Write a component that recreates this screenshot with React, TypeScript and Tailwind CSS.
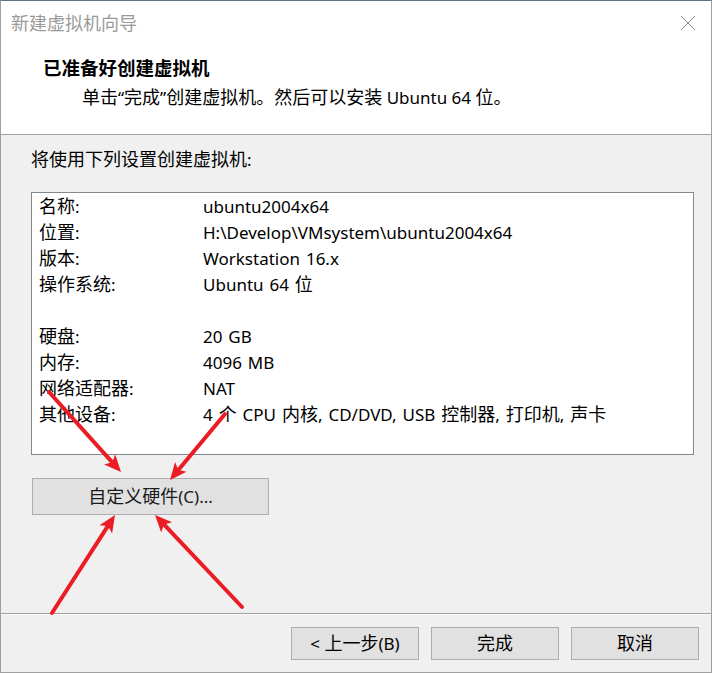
import React from "react";

type Pt = [number, number];

function arrowHead(t: Pt, p: Pt, len = 17, half = 7.5, notch = 4) {
  const dx = p[0] - t[0];
  const dy = p[1] - t[1];
  const l = Math.hypot(dx, dy);
  const ux = dx / l;
  const uy = dy / l;
  const nx = -uy;
  const ny = ux;
  const bx = p[0] - ux * len;
  const by = p[1] - uy * len;
  const pts: Pt[] = [
    p,
    [bx + nx * half, by + ny * half],
    [bx + ux * notch, by + uy * notch],
    [bx - nx * half, by - ny * half],
  ];
  return {
    points: pts.map((q) => `${q[0].toFixed(1)},${q[1].toFixed(1)}`).join(" "),
    end: [bx + ux * notch, by + uy * notch] as Pt,
  };
}

const arrows: { t: Pt; p: Pt }[] = [
  { t: [49, 392], p: [121, 472] },
  { t: [225, 414], p: [170, 480] },
  { t: [52, 613], p: [115, 515] },
  { t: [242, 607], p: [155, 515] },
];

const rows: [string, string][] = [
  ["名称:", "ubuntu2004x64"],
  ["位置:", "H:\\Develop\\VMsystem\\ubuntu2004x64"],
  ["版本:", "Workstation 16.x"],
  ["操作系统:", "Ubuntu 64 位"],
  ["", ""],
  ["硬盘:", "20 GB"],
  ["内存:", "4096 MB"],
  ["网络适配器:", "NAT"],
  ["其他设备:", "4 个 CPU 内核, CD/DVD, USB 控制器, 打印机, 声卡"],
];

// Renders CJK runs one pixel larger than Latin runs, as the linked CJK font does in the dialog.
function T({ s }: { s: string }) {
  const parts = s.split(/([\u3000-\u303f\u4e00-\u9fff\uff00-\uffef]+)/);
  return (
    <span>
      {parts.map((p, i) =>
        i % 2 === 1 ? (
          <span key={i} className="text-[18px] leading-none">
            {p}
          </span>
        ) : (
          <React.Fragment key={i}>{p}</React.Fragment>
        )
      )}
    </span>
  );
}

export default function App() {
  return (
    <div
      className="relative w-[712px] h-[673px] flex flex-col bg-[#f0f0f0] border-t border-t-[#5f7383] border-x border-x-[#a0a0a0] border-b border-b-[#a0a0a0] text-black text-[17px]"
      style={{ fontFamily: '"Noto Sans", "Noto Sans CJK SC", sans-serif' }}
    >
      {/* Header */}
      <div className="h-[133px] bg-white flex flex-col shrink-0">
        <div className="h-[44px] flex items-center justify-between pl-[10px] pr-[15px]">
          <span className="text-[18px] text-[#9a9a9a] leading-[24px]">新建虚拟机向导</span>
          <svg width="16" height="16" viewBox="0 0 16 16" className="shrink-0">
            <path d="M1 1 L15 15 M15 1 L1 15" stroke="#8a8a8a" strokeWidth="1" fill="none" />
          </svg>
        </div>
        <div className="mt-[11px] pl-[42px] leading-[24px] font-bold text-[18.5px]">已准备好创建虚拟机</div>
        <div className="mt-[6px] pl-[81px] leading-[24px]">
          <T s="单击“完成”创建虚拟机。然后可以安装 Ubuntu 64 位。" />
        </div>
      </div>
      <div className="h-px bg-[#a0a0a0] shrink-0" />

      {/* Body */}
      <div className="h-[478px] shrink-0 pl-[30px] flex flex-col">
        <div className="mt-[13px] leading-[24px]">
          <T s="将使用下列设置创建虚拟机:" />
        </div>
        <div className="mt-[20px] w-[663px] h-[263px] bg-white border border-[#828790] pt-[1px] pl-[7px]">
          <div className="grid grid-cols-[164px_1fr] leading-[26px]">
            {rows.map(([k, v], i) => (
              <React.Fragment key={i}>
                <div className="h-[26px] whitespace-nowrap">
                  <T s={k} />
                </div>
                <div className="h-[26px] whitespace-nowrap [word-spacing:1.5px]">
                  <T s={v} />
                </div>
              </React.Fragment>
            ))}
          </div>
        </div>
        <button className="mt-[23px] ml-[1px] w-[237px] h-[37px] bg-[#e1e1e1] border border-[#adadad] flex items-center justify-center leading-[24px] text-[#1a1a1a]">
          <T s="自定义硬件(C)..." />
        </button>
      </div>
      <div className="h-px bg-[#a0a0a0] shrink-0" />
      <div className="h-px bg-white shrink-0" />

      {/* Footer */}
      <div className="flex-1 flex justify-end items-start pt-[12px] pr-[12px] gap-[12px]">
        <button className="w-[128px] h-[33px] bg-[#e1e1e1] border border-[#adadad] flex items-center justify-center leading-[24px]">
          <T s="< 上一步(B)" />
        </button>
        <button className="w-[128px] h-[33px] bg-[#e1e1e1] border border-[#adadad] flex items-center justify-center leading-[24px]">
          <T s="完成" />
        </button>
        <button className="w-[128px] h-[33px] bg-[#e1e1e1] border border-[#adadad] flex items-center justify-center leading-[24px]">
          <T s="取消" />
        </button>
      </div>

      {/* Red arrows overlay */}
      <svg
        className="absolute left-[-1px] top-[-1px] pointer-events-none"
        width="712"
        height="673"
        viewBox="0 0 712 673"
      >
        {arrows.map((a, i) => {
          const h = arrowHead(a.t, a.p);
          return (
            <g key={i}>
              <line
                x1={a.t[0]}
                y1={a.t[1]}
                x2={h.end[0]}
                y2={h.end[1]}
                stroke="#ec1c24"
                strokeWidth="4"
                strokeLinecap="round"
              />
              <polygon points={h.points} fill="#ec1c24" />
            </g>
          );
        })}
      </svg>
    </div>
  );
}
